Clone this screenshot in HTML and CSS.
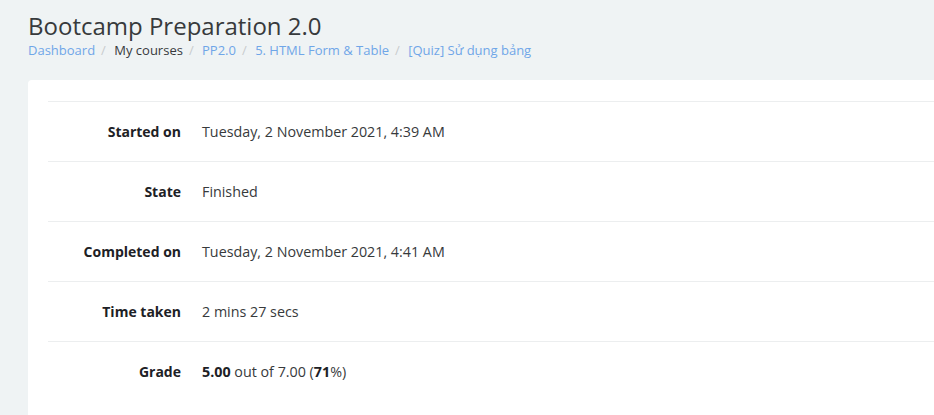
FILE: index.html
```html
<!DOCTYPE html>
<html>
<head>
<meta charset="utf-8">
<link rel="stylesheet" href="styles.css">
</head>
<body>
<header class="page-header">
  <h1 class="title">Bootcamp Preparation 2.0</h1>
  <nav class="breadcrumb">
    <a class="crumb link" href="#">Dashboard</a><span class="sep">/</span>
    <span class="crumb">My courses</span><span class="sep">/</span>
    <a class="crumb link" href="#">PP2.0</a><span class="sep">/</span>
    <a class="crumb link" href="#">5. HTML Form &amp; Table</a><span class="sep">/</span>
    <a class="crumb link" href="#">[Quiz] Sử dụng bảng</a>
  </nav>
</header>
<main class="card">
  <table class="summary">
    <tr><th>Started on</th><td>Tuesday, 2 November 2021, 4:39 AM</td></tr>
    <tr><th>State</th><td>Finished</td></tr>
    <tr><th>Completed on</th><td>Tuesday, 2 November 2021, 4:41 AM</td></tr>
    <tr><th>Time taken</th><td>2 mins 27 secs</td></tr>
    <tr><th>Grade</th><td><b>5.00</b> out of 7.00 (<b>71</b>%)</td></tr>
  </table>
</main>
</body>
</html>
```
FILE: styles.css
```css
html, body {
  margin: 0;
  padding: 0;
  background: #eff3f4;
  font-family: "Open Sans", "Liberation Sans", sans-serif;
  color: #373a3c;
  overflow: hidden;
  height: 415px;
}
.page-header {
  padding: 9px 0 0 28px;
}
.title {
  margin: 0;
  font-size: 24px;
  font-weight: 400;
  line-height: 34px;
  color: #373a3c;
}
.breadcrumb {
  margin-top: -2px;
  font-size: 13px;
  line-height: 18px;
  white-space: nowrap;
}
.crumb {
  color: #373a3c;
}
.crumb.link {
  color: #6fa6e8;
  text-decoration: none;
}
.sep {
  color: #c8cbcd;
  padding: 0 5px 0 6px;
}
.card {
  margin: 21px 0 0 28px;
  background: #fff;
  border-top-left-radius: 4px;
  padding: 21px 0 20px 20px;
  min-height: 300px;
}
.summary {
  width: 100%;
  border-collapse: collapse;
  font-size: 14px;
}
.summary tr {
  border-top: 1px solid #eceeef;
}
.summary th {
  width: 133px;
  text-align: right;
  font-weight: 700;
  color: #1d2125;
  padding: 0 21px 0 0;
  height: 59px;
}
.summary td {
  padding: 0;
  height: 59px;
  font-size: 14.3px;
  color: #373a3c;
}
.summary td b {
  color: #1d2125;
}
```
